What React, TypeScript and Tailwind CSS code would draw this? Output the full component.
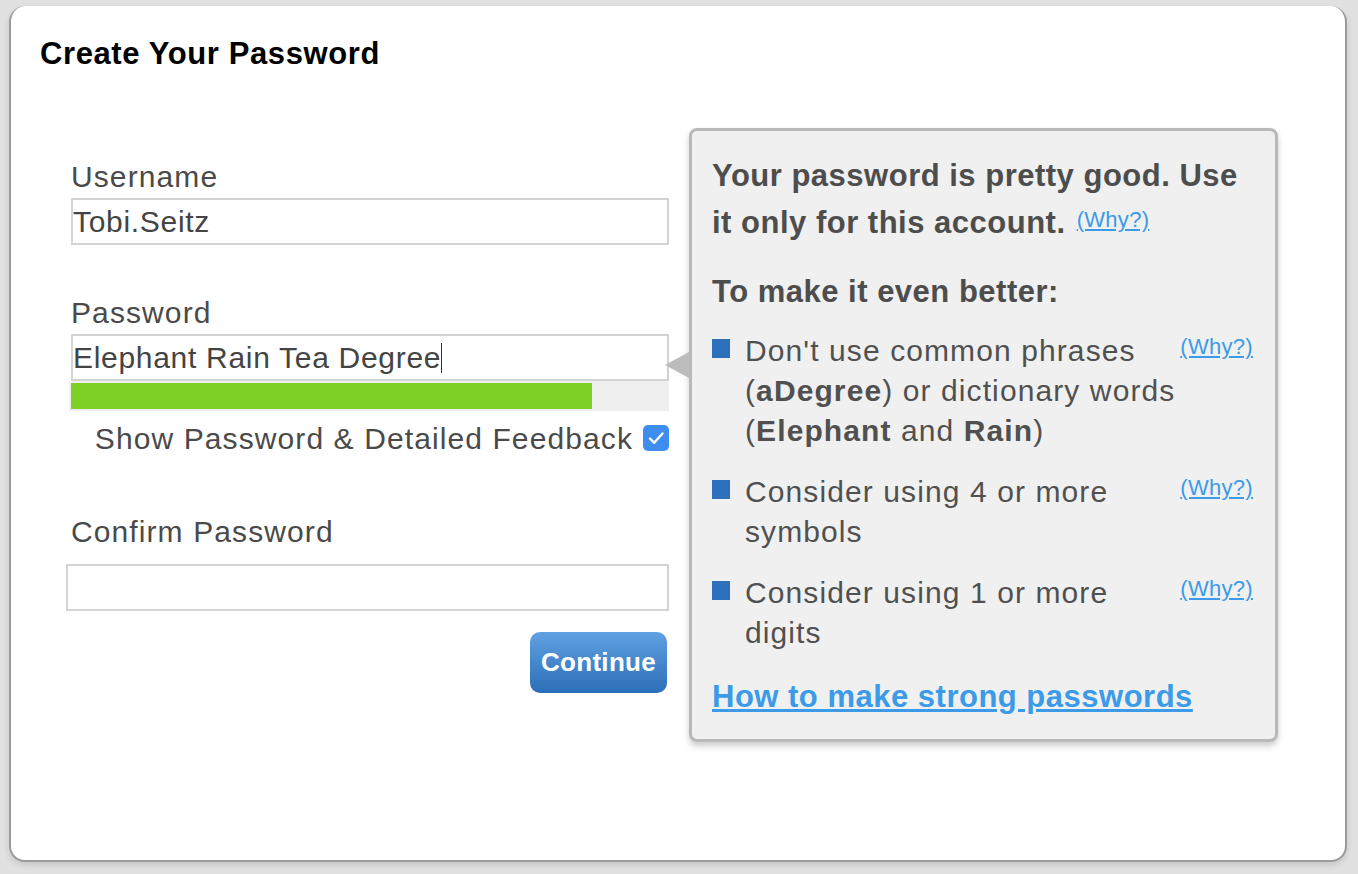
import React from "react";

const font = { fontFamily: '"Liberation Sans", Arial, sans-serif' };

export default function App() {
  return (
    <div className="w-[1358px] h-[874px] bg-[#e1e1e1] pt-[6px] pl-[9px]" style={font}>
      <div className="w-[1338px] h-[856px] bg-white rounded-[16px] border-x-2 border-b-2 border-t-0 border-[#9b9b9b] shadow-[0_3px_6px_rgba(0,0,0,0.12)]">
        <h1 className="pt-[30px] pl-[29px] text-[31px] leading-[36px] font-bold text-black tracking-[0.6px]">
          Create Your Password
        </h1>
        <div className="mt-[56px] pl-[60px] flex items-start">
          <Form />
          <Feedback />
        </div>
      </div>
    </div>
  );
}

//* —————————————————————————————————————————————————————————————————————————————————————

const Label = ({ children, className = "" }: { children: React.ReactNode; className?: string }) => (
  <div className={`text-[30px] leading-[36px] text-[#4a4a4a] tracking-[1.1px] ${className}`}>
    {children}
  </div>
);

const Field = ({ children, className = "" }: { children?: React.ReactNode; className?: string }) => (
  <div
    className={`h-[47px] border-2 border-[#d3d3d3] bg-white flex items-center text-[30px] text-[#444] tracking-[0.7px] ${className}`}>
    {children}
  </div>
);

const Form = () => (
  <div className="w-[598px] pt-[31px] flex flex-col">
    <Label>Username</Label>
    <Field className="mt-[3px]">Tobi.Seitz</Field>

    <Label className="mt-[50px]">Password</Label>
    <Field className="mt-[3px]">
      Elephant Rain Tea Degree
      <span className="inline-block w-px h-[30px] bg-[#333]" />
    </Field>
    <div className="h-[30px] bg-[#efefef] p-[2px] -ml-[2px]">
      <div className="w-[521px] h-full bg-[#7ed027]" />
    </div>

    <div className="mt-[9px] h-[36px] flex items-center justify-end gap-[10px]">
      <span className="text-[30px] text-[#4a4a4a] tracking-[1.1px]">
        Show Password &amp; Detailed Feedback
      </span>
      <svg width="26" height="26" viewBox="0 0 26 26">
        <rect width="26" height="26" rx="5" fill="#3d8ef0" />
        <path d="M7 13.5 L11.2 17.8 L19.5 8.5" fill="none" stroke="#fff" strokeWidth="2.4" strokeLinecap="round" strokeLinejoin="round" />
      </svg>
    </div>

    <Label className="mt-[58px]">Confirm Password</Label>
    <Field className="mt-[14px] -ml-[5px]" />

    <button className="mt-[21px] mr-[2px] self-end w-[137px] h-[61px] rounded-[10px] bg-linear-to-b from-[#5fa1e2] to-[#2b6fb8] text-white font-bold text-[26px] tracking-[0.3px]">
      Continue
    </button>
  </div>
);

//* —————————————————————————————————————————————————————————————————————————————————————

const Why = ({ className = "" }: { className?: string }) => (
  <a className={`text-[22px] text-[#3b9be9] underline tracking-[0.3px] ${className}`}>(Why?)</a>
);

const Tip = ({ lines, top }: { lines: React.ReactNode; top?: boolean }) => (
  <div className={`flex items-start ${top ? "mt-[17px]" : "mt-[21px]"}`}>
    <div className="w-[18px] h-[19px] bg-[#2c6fba] mt-[8px] shrink-0" />
    <div className="w-[432px] ml-[15px] text-[30px] leading-[40px] text-[#505050] tracking-[1.1px] whitespace-nowrap">
      {lines}
    </div>
    <Why className="leading-[40px] relative -top-[4px] ml-auto" />
  </div>
);

const Feedback = () => (
  <div className="relative ml-[20px] w-[589px] h-[614px] bg-[#f0f0f0] border-[3px] border-[#b9b9b9] rounded-[8px] shadow-[0_4px_6px_rgba(0,0,0,0.2)] pt-[23px] pl-[20px] pr-[22px]">
    <div className="absolute -left-[27px] top-[221px] w-0 h-0 border-y-[13px] border-y-transparent border-r-[24px] border-r-[#bcbcbc]" />

    <p className="text-[31px] leading-[44px] font-bold text-[#4d4d4d] tracking-[0.5px]">
      Your password is pretty good. Use
      <br />
      it only for this account.{" "}
      <Why className="font-normal align-[6px] ml-[2px]" />
    </p>
    <p className="mt-[25px] text-[31px] leading-[44px] font-bold text-[#4d4d4d] tracking-[0.5px]">
      To make it even better:
    </p>

    <Tip
      top
      lines={
        <>
          Don't use common phrases
          <br />(<b>aDegree</b>) or dictionary words
          <br />(<b>Elephant</b> and <b>Rain</b>)
        </>
      }
    />
    <Tip
      lines={
        <>
          Consider using 4 or more
          <br />
          symbols
        </>
      }
    />
    <Tip
      lines={
        <>
          Consider using 1 or more
          <br />
          digits
        </>
      }
    />

    <a className="block mt-[24px] text-[31px] leading-[40px] font-bold text-[#3b9be9] underline tracking-[0.5px]">
      How to make strong passwords
    </a>
  </div>
);
